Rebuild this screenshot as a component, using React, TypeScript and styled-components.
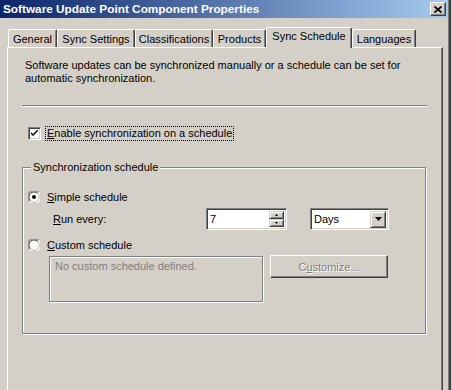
import React from "react";
import styled, { createGlobalStyle } from "styled-components";

const GlobalStyle = createGlobalStyle`
  html, body {
    margin: 0;
    padding: 0;
    background: #d4d0c8;
  }
  body {
    font-family: "Liberation Sans", Arial, sans-serif;
    font-size: 11px;
    color: #000;
  }
`;

const Window = styled.div`
  width: 452px;
  height: 390px;
  overflow: hidden;
  background: #d4d0c8;
  box-sizing: border-box;
  border-right: 1px solid #d4d0c8;
  box-shadow: inset -2px 0 0 #404040, inset -3px 0 0 #808080;
`;

const TitleBar = styled.div`
  height: 18px;
  margin-right: 3px;
  display: flex;
  align-items: center;
  justify-content: space-between;
  padding: 0 2px 0 3px;
  background: linear-gradient(to right, #0a246a, #a6caf0);
  color: #fff;
  font-weight: bold;
  font-size: 11.8px;
`;

const CloseBtn = styled.div`
  width: 16px;
  height: 14px;
  box-sizing: border-box;
  background: #d4d0c8;
  border: 1px solid;
  border-color: #fff #404040 #404040 #fff;
  box-shadow: inset -1px -1px 0 #808080;
  display: flex;
  align-items: center;
  justify-content: center;
`;

const Body = styled.div`
  padding: 9px 0 0 7px;
`;

const TabRow = styled.div`
  display: flex;
  align-items: flex-end;
  height: 20px;
  padding-left: 1px;
  position: relative;
  z-index: 1;
`;

const Tab = styled.div<{ $w: number; $active?: boolean }>`
  width: ${(p) => p.$w}px;
  height: ${(p) => (p.$active ? 21 : 18)}px;
  margin-bottom: ${(p) => (p.$active ? -1 : 0)}px;
  box-sizing: border-box;
  background: #d4d0c8;
  border-top: 1px solid #fff;
  border-left: 1px solid #fff;
  border-right: 1px solid #404040;
  border-radius: 2px 2px 0 0;
  box-shadow: inset -1px 0 0 #808080;
  display: flex;
  justify-content: center;
  padding-top: ${(p) => (p.$active ? 2 : 3)}px;
  white-space: nowrap;
`;

const Panel = styled.div`
  width: 436px;
  height: 360px;
  box-sizing: border-box;
  border: 1px solid;
  border-color: #fff #404040 #404040 #fff;
  box-shadow: inset -1px -1px 0 #808080;
  padding: 11px 0 0 14px;
`;

const Description = styled.p`
  margin: 0 0 0 3px;
  line-height: 13px;
  width: 400px;
`;

const Separator = styled.div`
  width: 405px;
  height: 1px;
  margin-top: 20px;
  background: #808080;
  border-bottom: 1px solid #fff;
`;

const CheckRow = styled.div`
  display: flex;
  align-items: center;
  gap: 5px;
  margin: 19px 0 0 6px;
  height: 14px;
`;

const CheckBox = styled.div`
  width: 13px;
  height: 13px;
  box-sizing: border-box;
  background: #fff;
  border: 1px solid;
  border-color: #808080 #fff #fff #808080;
  box-shadow: inset 1px 1px 0 #404040, inset -1px -1px 0 #d4d0c8;
  display: flex;
  align-items: center;
  justify-content: center;
`;

const FocusLabel = styled.span`
  outline: 1px dotted #000;
  padding: 0 1px;
  line-height: 13px;
`;

const Mn = styled.span`
  text-decoration: underline;
`;

const Group = styled.div`
  position: relative;
  width: 404px;
  height: 167px;
  box-sizing: border-box;
  margin-top: 27px;
  border: 1px solid #808080;
  box-shadow: inset 1px 1px 0 #fff, 1px 1px 0 #fff;
  padding: 20px 0 0 5px;
`;

const Legend = styled.span`
  position: absolute;
  top: -7px;
  left: 8px;
  padding: 0 2px;
  background: #d4d0c8;
  line-height: 13px;
`;

const RadioRow = styled.div<{ $top: number }>`
  display: flex;
  align-items: center;
  gap: 7px;
  height: 14px;
  margin-top: ${(p) => p.$top}px;
`;

const SubRow = styled.div`
  display: flex;
  align-items: center;
  height: 22px;
  margin-top: 4px;
  padding-left: 25px;
`;

const RunLabel = styled.span`
  width: 153px;
`;

const Field = styled.div<{ $w: number }>`
  width: ${(p) => p.$w}px;
  height: 22px;
  box-sizing: border-box;
  background: #fff;
  border: 1px solid;
  border-color: #808080 #fff #fff #808080;
  box-shadow: inset 1px 1px 0 #404040, inset -1px -1px 0 #d4d0c8;
  display: flex;
  align-items: center;
  padding: 2px;
  margin-right: 23px;
`;

const FieldText = styled.span`
  flex: 1;
  padding-left: 1px;
`;

const SpinCol = styled.div`
  display: flex;
  flex-direction: column;
  align-self: stretch;
`;

const RaisedBtn = styled.div<{ $w: number; $h: number }>`
  width: ${(p) => p.$w}px;
  height: ${(p) => p.$h}px;
  box-sizing: border-box;
  background: #d4d0c8;
  border: 1px solid;
  border-color: #d4d0c8 #404040 #404040 #d4d0c8;
  box-shadow: inset 1px 1px 0 #fff, inset -1px -1px 0 #808080;
  display: flex;
  align-items: center;
  justify-content: center;
`;

const CustomRow = styled.div`
  display: flex;
  align-items: flex-start;
  gap: 7px;
  margin-top: 4px;
  padding-left: 21px;
`;

const InfoBox = styled.div`
  width: 214px;
  height: 46px;
  box-sizing: border-box;
  border: 1px solid #808080;
  box-shadow: inset 1px 1px 0 #fff, 1px 1px 0 #fff;
  color: #808080;
  padding: 3px 5px;
  line-height: 13px;
`;

const PushButton = styled.div`
  width: 118px;
  height: 23px;
  margin-top: -1px;
  box-sizing: border-box;
  background: #d4d0c8;
  border: 1px solid;
  border-color: #fff #404040 #404040 #fff;
  box-shadow: inset -1px -1px 0 #808080;
  display: flex;
  align-items: center;
  justify-content: center;
  color: #808080;
  text-shadow: 1px 1px 0 #fff;
`;

const Radio = ({ checked }: { checked?: boolean }) => (
  <svg width="12" height="12" viewBox="0 0 12 12">
    <circle cx="6" cy="6" r="5" fill="#fff" />
    <path d="M1.7 10.3 A6 6 0 0 1 10.3 1.7" stroke="#808080" strokeWidth="1" fill="none" transform="translate(-0.5 -0.5) scale(1.08)" />
    <path d="M2.4 9.6 A5 5 0 0 1 9.6 2.4" stroke="#404040" strokeWidth="1" fill="none" />
    <path d="M10.3 1.7 A6 6 0 0 1 1.7 10.3" stroke="#fff" strokeWidth="1" fill="none" transform="translate(-0.5 -0.5) scale(1.08)" />
    <path d="M9.6 2.4 A5 5 0 0 1 2.4 9.6" stroke="#d4d0c8" strokeWidth="1" fill="none" />
    {checked && <circle cx="6" cy="6" r="2" fill="#000" />}
  </svg>
);

const Arrow = ({ dir, size }: { dir: "up" | "down"; size: number }) => (
  <svg width={size * 2 - 1} height={size} viewBox={`0 0 ${size * 2 - 1} ${size}`}>
    {dir === "up" ? (
      <polygon points={`${size - 0.5},0 ${size * 2 - 1},${size} 0,${size}`} fill="#000" />
    ) : (
      <polygon points={`0,0 ${size * 2 - 1},0 ${size - 0.5},${size}`} fill="#000" />
    )}
  </svg>
);

const tabs = [
  { label: "General", w: 49 },
  { label: "Sync Settings", w: 78 },
  { label: "Classifications", w: 78 },
  { label: "Products", w: 53 },
  { label: "Sync Schedule", w: 86, active: true },
  { label: "Languages", w: 64 },
];

export default function App() {
  return (
    <>
      <GlobalStyle />
      <Window>
        <TitleBar>
          <span>Software Update Point Component Properties</span>
          <CloseBtn>
            <svg width="8" height="7" viewBox="0 0 8 7">
              <path d="M0.5 0.5 L7.5 6.5 M7.5 0.5 L0.5 6.5" stroke="#000" strokeWidth="1.8" />
            </svg>
          </CloseBtn>
        </TitleBar>
        <Body>
          <TabRow>
            {tabs.map((t) => (
              <Tab key={t.label} $w={t.w} $active={t.active}>
                {t.label}
              </Tab>
            ))}
          </TabRow>
          <Panel>
            <Description>
              Software updates can be synchronized manually or a schedule can be set for
              automatic synchronization.
            </Description>
            <Separator />
            <CheckRow>
              <CheckBox>
                <svg width="7" height="7" viewBox="0 0 7 7">
                  <path d="M0 2 L0 4 L2 6 L7 1 L7 -1 L2 4 Z" fill="#000" />
                </svg>
              </CheckBox>
              <FocusLabel>
                <Mn>E</Mn>nable synchronization on a schedule
              </FocusLabel>
            </CheckRow>
            <Group>
              <Legend>Synchronization schedule</Legend>
              <RadioRow $top={2}>
                <Radio checked />
                <span>
                  <Mn>S</Mn>imple schedule
                </span>
              </RadioRow>
              <SubRow>
                <RunLabel>
                  <Mn>R</Mn>un every:
                </RunLabel>
                <Field $w={81}>
                  <FieldText>7</FieldText>
                  <SpinCol>
                    <RaisedBtn $w={15} $h={8}>
                      <Arrow dir="up" size={2} />
                    </RaisedBtn>
                    <RaisedBtn $w={15} $h={8}>
                      <Arrow dir="down" size={2} />
                    </RaisedBtn>
                  </SpinCol>
                </Field>
                <Field $w={79}>
                  <FieldText>Days</FieldText>
                  <RaisedBtn $w={16} $h={17}>
                    <Arrow dir="down" size={4} />
                  </RaisedBtn>
                </Field>
              </SubRow>
              <RadioRow $top={8}>
                <Radio />
                <span>
                  <Mn>C</Mn>ustom schedule
                </span>
              </RadioRow>
              <CustomRow>
                <InfoBox>No custom schedule defined.</InfoBox>
                <PushButton>
                  <span>
                    C<Mn>u</Mn>stomize...
                  </span>
                </PushButton>
              </CustomRow>
            </Group>
          </Panel>
        </Body>
      </Window>
    </>
  );
}
